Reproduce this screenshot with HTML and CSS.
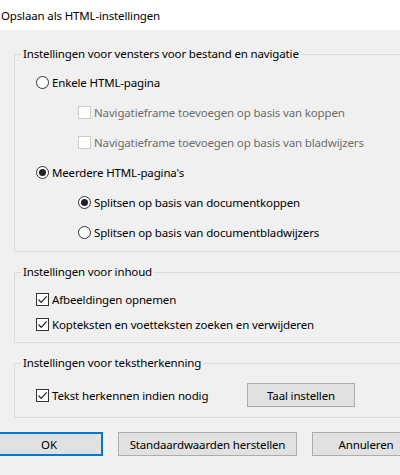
FILE: index.html
```html
<!DOCTYPE html>
<html lang="nl">
<head>
<meta charset="utf-8">
<title>Opslaan als HTML-instellingen</title>
<link rel="stylesheet" href="styles.css">
</head>
<body>
<div class="dialog">
  <div class="titlebar">Opslaan als HTML-instellingen</div>
  <div class="content">
    <fieldset class="group group-windows">
      <legend>Instellingen voor vensters voor bestand en navigatie</legend>
      <div class="row"><span class="radio"></span><span class="label">Enkele HTML-pagina</span></div>
      <div class="row sub disabled"><span class="check"></span><span class="label">Navigatieframe toevoegen op basis van koppen</span></div>
      <div class="row sub disabled"><span class="check"></span><span class="label">Navigatieframe toevoegen op basis van bladwijzers</span></div>
      <div class="row"><span class="radio checked"></span><span class="label">Meerdere HTML-pagina's</span></div>
      <div class="row sub"><span class="radio checked"></span><span class="label">Splitsen op basis van documentkoppen</span></div>
      <div class="row sub"><span class="radio"></span><span class="label">Splitsen op basis van documentbladwijzers</span></div>
    </fieldset>
    <fieldset class="group group-content">
      <legend>Instellingen voor inhoud</legend>
      <div class="row short"><span class="check checked"><svg viewBox="0 0 11 11" width="11" height="11"><polyline points="1.5,5.5 4.2,8.3 9.6,2.3" fill="none" stroke="#222" stroke-width="1.2"/></svg></span><span class="label">Afbeeldingen opnemen</span></div>
      <div class="row short"><span class="check checked"><svg viewBox="0 0 11 11" width="11" height="11"><polyline points="1.5,5.5 4.2,8.3 9.6,2.3" fill="none" stroke="#222" stroke-width="1.2"/></svg></span><span class="label">Kopteksten en voetteksten zoeken en verwijderen</span></div>
    </fieldset>
    <fieldset class="group group-ocr">
      <legend>Instellingen voor tekstherkenning</legend>
      <div class="row ocr-row">
        <div class="ocr-option"><span class="check checked"><svg viewBox="0 0 11 11" width="11" height="11"><polyline points="1.5,5.5 4.2,8.3 9.6,2.3" fill="none" stroke="#222" stroke-width="1.2"/></svg></span><span class="label">Tekst herkennen indien nodig</span></div>
        <button class="btn btn-lang">Taal instellen</button>
      </div>
    </fieldset>
    <div class="buttons">
      <button class="btn btn-ok">OK</button>
      <button class="btn btn-defaults">Standaardwaarden herstellen</button>
      <button class="btn btn-cancel">Annuleren</button>
    </div>
  </div>
</div>
</body>
</html>
```
FILE: styles.css
```css
html, body {
  margin: 0;
  padding: 0;
  background: #f0f0f0;
  overflow: hidden;
}
body {
  width: 400px;
  height: 475px;
  font-family: "Noto Sans", "Open Sans", sans-serif;
  font-size: 11.5px;
  letter-spacing: -0.15px;
  color: #000;
}
.dialog {
  width: 430px;
}
.titlebar {
  height: 30px;
  background: #fff;
  display: flex;
  align-items: center;
  padding-left: 1px;
}
.content {
  padding: 16px 0 0 14px;
}
.group {
  margin: 0 0 12px 0;
  border: 1px solid #dcdcdc;
  padding: 0 0 0 21px;
  width: 380px;
  min-width: 0;
}
.group legend {
  padding: 0 2px;
  margin-left: -15px;
  line-height: 16px;
}
.group-windows { padding-top: 5px; padding-bottom: 4px; }
.group-content { padding-top: 7px; padding-bottom: 5px; }
.group-ocr { padding-top: 9px; padding-bottom: 7px; }
.row {
  display: flex;
  align-items: center;
  height: 30px;
}
.row.short { height: 25px; }
.row.sub { padding-left: 42px; }
.row.disabled { color: #6d6d6d; }
.label { margin-left: 3px; }
.ocr-option {
  display: flex;
  align-items: center;
  width: 211px;
  flex: none;
}
.radio {
  width: 11px;
  height: 11px;
  border: 1px solid #333;
  border-radius: 50%;
  background: #fff;
  display: flex;
  align-items: center;
  justify-content: center;
  flex: none;
}
.radio.checked::after {
  content: "";
  width: 7px;
  height: 7px;
  border-radius: 50%;
  background: #222;
}
.check {
  width: 11px;
  height: 11px;
  border: 1px solid #333;
  background: #fff;
  display: flex;
  align-items: center;
  justify-content: center;
  flex: none;
}
.disabled .check {
  border-color: #cccccc;
  background: #fff;
}
.btn {
  font-family: inherit;
  font-size: 11.5px;
  letter-spacing: -0.15px;
  height: 24px;
  width: 108px;
  background: #e1e1e1;
  border: 1px solid #adadad;
  color: #000;
  padding: 0;
  margin: 0;
  flex: none;
}
.buttons {
  display: flex;
  gap: 15px;
  margin-left: -19px;
  margin-top: 14px;
}
.btn-ok { border: 2px solid #0078d7; }
.btn-defaults { width: 179px; }
```
